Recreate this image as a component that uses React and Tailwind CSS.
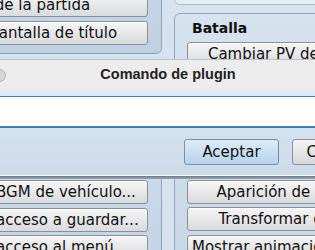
import React from "react";

const btn =
  "h-[24px] shrink-0 rounded-[3px] border border-[#8a9099] bg-gradient-to-b from-[#f6f6f6] to-[#d9dadc] text-[15px] leading-[22px] text-[#111] whitespace-nowrap overflow-hidden shadow-[inset_0_1px_0_#ffffff]";

function Btn({ children, className = "" }) {
  return <div className={`${btn} ${className}`}>{children}</div>;
}

const dim = "bg-gradient-to-b from-[#e4e4e4] to-[#c6c7c9]";

export default function App() {
  return (
    <div
      className="relative w-[315px] h-[250px] overflow-hidden bg-[#d6e2ee]"
      style={{ fontFamily: '"DejaVu Sans", sans-serif' }}
    >
      {/* background page: two columns of grouped command buttons */}
      <div className="flex gap-[12px]">
        {/* left column */}
        <div className="ml-[-100px] w-[262px] shrink-0 flex flex-col">
          <div className="mt-[-44px] rounded-b-[6px] border border-[#8ea3b9] bg-gradient-to-b from-[#c9d8e8] to-[#bfd0e2] pl-[10px] pr-[13px] pt-[8px] pb-[8px] flex flex-col gap-[4px]">
            <Btn className="text-center">Abrir menú de guardado</Btn>
            <Btn className="text-center">Fin de la partida</Btn>
            <Btn className="text-center pr-[18px]">Volver a pantalla de título</Btn>
          </div>
          <div className="mt-[8px] rounded-[6px] border border-[#8ea3b9] bg-gradient-to-b from-[#d3e0ed] to-[#c3d4e6] pl-[10px] pr-[13px] pt-[7px] pb-[8px] flex flex-col gap-[3.5px]">
            <div className="h-[24px] text-[14px] font-bold leading-[24px] pl-[100px]">Sistema</div>
            <Btn className="text-left pl-[16px]">Cambiar BGM de batalla</Btn>
            <Btn className="text-left pl-[16px]">Cambiar ME de victoria</Btn>
            <Btn className="text-left pl-[16px]">Cambiar ME de derrota</Btn>
            <Btn className={`text-left pl-[16px] ${dim}`}>Cambiar BGM de vehículo...</Btn>
            <Btn className={`text-left pl-[16px] ${dim}`}>Cambiar acceso a guardar...</Btn>
            <Btn className={`text-left pl-[16px] ${dim}`}>Cambiar acceso al menú...</Btn>
          </div>
        </div>

        {/* right column */}
        <div className="w-[260px] shrink-0 flex flex-col">
          <div className="mt-[-30px] h-[35px] rounded-b-[6px] border border-[#a9bacb] bg-[#e6edf4]" />
          <div className="mt-[8px] rounded-[6px] border border-[#8ea3b9] bg-gradient-to-b from-[#d6e2ee] to-[#c8d7e7] pl-[12px] pt-[4px] pb-[8px] flex flex-col gap-[3.5px]">
            <div className="h-[20.5px] text-[14px] font-bold leading-[21px] pl-[5px] text-[#111]">Batalla</div>
            <Btn className="w-[223px] text-center px-[4px]">Cambiar PV de enemigo</Btn>
            <Btn className="w-[223px] text-center px-[4px]">Cambiar PM de enemigo</Btn>
            <Btn className="w-[223px] text-center px-[4px]">Cambiar PT de enemigo</Btn>
            <Btn className="w-[223px] text-center px-[4px]">Cambiar estado de enemigo</Btn>
            <Btn className="w-[223px] text-center px-[4px]">Recuperar todo enemigo</Btn>
            <Btn className={`w-[223px] text-center px-[4px] ${dim}`}>Aparición de enemigo</Btn>
            <Btn className={`w-[223px] text-center px-[4px] ${dim}`}>Transformar enemigo</Btn>
            <Btn className={`w-[223px] text-center px-[4px] ${dim}`}>Mostrar animación de batalla</Btn>
          </div>
        </div>
      </div>

      {/* plugin command dialog window over the page */}
      <div className="absolute left-[-20px] top-[59px] w-[376px] flex flex-col">
        <div className="relative h-[31px] border-t border-[#b9c3cd] bg-[#ececec] flex items-center justify-center">
          <div className="absolute left-[13px] top-[9px] w-[13px] h-[13px] rounded-full border border-[#b0b0b0] bg-[#d6d6d6]" />
          <span
            className="text-[14.5px] font-bold text-[#222]"
            style={{ fontFamily: '"Liberation Sans", Arial, sans-serif' }}
          >
            Comando de plugin
          </span>
        </div>
        <div className="bg-gradient-to-b from-[#dbe7f3] to-[#ccdbea]">
          <div className="pt-[6px] bg-[#dde9f5]">
            <div className="h-[32px] border-t-[1.5px] border-b-[2px] border-[#3f7fc0] bg-white" />
          </div>
          <div className="h-[47px] flex items-start gap-[13px] pl-[204px] pt-[11px]">
            <div className="w-[95px] shrink-0 h-[26px] rounded-[3px] border border-[#7d8ea0] bg-gradient-to-b from-[#dcebf8] to-[#b7d3ec] text-center text-[15px] leading-[24px] text-[#111]">
              Aceptar
            </div>
            <div className="w-[95px] shrink-0 h-[26px] rounded-[3px] border border-[#8a9099] bg-gradient-to-b from-[#f4f4f4] to-[#d6d7d9] text-center text-[15px] leading-[24px] text-[#111]">
              Cancelar
            </div>
          </div>
        </div>
        <div className="h-[1px] bg-[#f4f8fb]" />
        <div className="h-[3px] bg-gradient-to-b from-[#6c7985] to-[#9aa6b2]" />
      </div>
    </div>
  );
}
